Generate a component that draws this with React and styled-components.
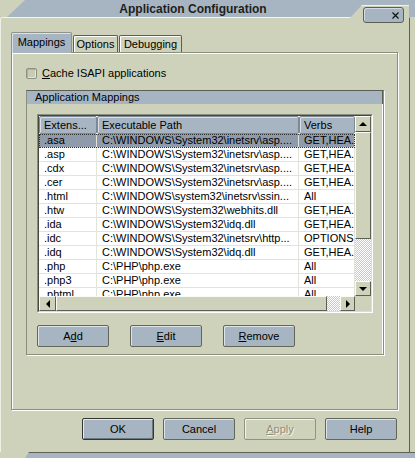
import React from 'react';
import styled, { createGlobalStyle } from 'styled-components';

// theme colours taken from the skinned dialog
const BEIGE = '#ced2bb';
const SLATE = '#a7b5c2';
const EDGE = '#8a8e7e';
const DARK = '#5c6054';
const GRID = '#e2e4dc';

const GlobalStyle = createGlobalStyle`
  html, body {
    margin: 0;
    padding: 0;
    background: ${BEIGE};
  }
  body {
    font-family: 'Liberation Sans', Arial, sans-serif;
    font-size: 11px;
    color: #000;
  }
`;

const Window = styled.div`
  position: relative;
  width: 415px;
  height: 458px;
  background: ${BEIGE};
  display: flex;
  flex-direction: column;
  overflow: hidden;
`;

const TitleBar = styled.div`
  height: 17px;
  margin-left: 7px;
  padding-right: 36px;
  background: ${SLATE};
  clip-path: polygon(18px 0, 100% 0, 100% 100%, 0 100%);
  font-size: 12px;
  font-weight: bold;
  line-height: 18px;
  text-align: center;
  color: #1d1f1c;
`;

// the beige notch that holds the close box, sits over the title bar
const CloseNotch = styled.div`
  position: absolute;
  top: 5px;
  left: 348px;
  width: 61px;
  height: 14px;
  background: ${BEIGE};
  border-top: 1px solid #f1f3ea;
  clip-path: polygon(14px 0, 100% 0, 100% 100%, 0 100%);
`;

const CloseButton = styled.div`
  position: absolute;
  top: 7px;
  left: 363px;
  width: 41px;
  height: 16px;
  box-sizing: border-box;
  background: ${SLATE};
  border: 1px solid ${DARK};
  border-radius: 3px;
  box-shadow: inset 1px 1px 0 #d3dbe2;
  display: flex;
  align-items: center;
  justify-content: flex-end;
  padding-right: 4px;
`;

const Frame = styled.div`
  flex: 1;
  width: 410px;
  box-sizing: border-box;
  border-top: 1px solid #f3f5ec;
  border-left: 1px solid #eef0e6;
  border-right: 1px solid ${DARK};
  border-top-left-radius: 3px;
  padding: 14px 11px 12px 10px;
  display: flex;
  flex-direction: column;
`;

const BottomEdge = styled.div`
  height: 6px;
  margin-left: 25px;
  box-sizing: border-box;
  background: ${SLATE};
  border-top: 1px solid #5d6354;
  clip-path: polygon(4px 0, 100% 0, 100% 100%, 0 100%);
`;

const TabStrip = styled.div`
  display: flex;
  align-items: flex-end;
  height: 21px;
  margin-bottom: -1px;
  position: relative;
  z-index: 1;
`;

const Tab = styled.div`
  width: ${(p) => p.$width}px;
  margin-left: ${(p) => p.$gap || 0}px;
  box-sizing: border-box;
  height: ${(p) => (p.$active ? 21 : 17)}px;
  margin-bottom: ${(p) => (p.$active ? 0 : 1)}px;
  background: ${(p) => (p.$active ? SLATE : BEIGE)};
  border: 1px solid ${(p) => (p.$active ? '#8e948a' : DARK)};
  border-bottom: none;
  border-radius: 2px 2px 0 0;
  box-shadow: inset 1px 1px 0 ${(p) => (p.$active ? '#dbe2e8' : '#fff')};
  text-align: center;
  line-height: ${(p) => (p.$active ? 19 : 16)}px;
`;

const Panel = styled.div`
  height: 358px;
  box-sizing: border-box;
  border: 1px solid ${EDGE};
  box-shadow: inset 1px 1px 0 #fff, 1px 1px 0 #fff;
  padding: 14px 13px 0 14px;
  display: flex;
  flex-direction: column;
`;

const CheckRow = styled.label`
  display: flex;
  align-items: center;
  gap: 5px;
  height: 12px;
  line-height: 12px;
`;

const Checkbox = styled.span`
  width: 11px;
  height: 11px;
  box-sizing: border-box;
  border: 1px solid #8d9183;
  border-radius: 2px;
  background: #c8ccb5;
  box-shadow: inset 1px 1px 0 #aeb29d, inset -1px -1px 0 #e4e6da;
`;

const Group = styled.div`
  margin-top: 11px;
  border: 1px solid ${EDGE};
  border-top-color: ${DARK};
  box-shadow: inset -1px 0 0 #fff, 1px 1px 0 #fff;
  padding-bottom: 7px;
  display: flex;
  flex-direction: column;
`;

const GroupTitle = styled.div`
  height: 13px;
  line-height: 13px;
  padding-left: 8px;
  background: ${SLATE};
  border-right: 1px solid ${DARK};
`;

const ListOuter = styled.div`
  height: 199px;
  margin: 10px 10px 0 10px;
  box-sizing: border-box;
  border: 1px solid;
  border-color: ${EDGE} #fff #fff ${EDGE};
`;

const ListInner = styled.div`
  height: 100%;
  box-sizing: border-box;
  border: 1px solid;
  border-color: #45483f #dcdfcf #dcdfcf #45483f;
  background: #fff;
  display: grid;
  grid-template-columns: 1fr 16px;
  grid-template-rows: 1fr 15px;
`;

const Table = styled.div`
  overflow: hidden;
  display: flex;
  flex-direction: column;
`;

const COLS = '58px 202px 1fr';

const HeaderRow = styled.div`
  display: grid;
  grid-template-columns: ${COLS};
  height: 18px;
  flex-shrink: 0;
`;

const HeaderCell = styled.div`
  box-sizing: border-box;
  background: ${SLATE};
  border: 1px solid #7d8894;
  border-radius: 2px;
  box-shadow: inset 1px 1px 0 #d9e0e6;
  padding-left: 4px;
  line-height: 16px;
  white-space: nowrap;
  overflow: hidden;
`;

const Row = styled.div`
  display: grid;
  grid-template-columns: ${COLS};
  height: 14px;
  flex-shrink: 0;
  box-sizing: border-box;
  border-bottom: 1px solid ${GRID};
  background: ${(p) => (p.$selected ? '#8f9bab' : '#fff')};
  outline: ${(p) => (p.$selected ? '1px dotted #333' : 'none')};
  outline-offset: -1px;
`;

const Cell = styled.div`
  padding-left: 5px;
  line-height: 13px;
  white-space: nowrap;
  overflow: hidden;
  border-right: 1px solid ${GRID};
`;

const VScroll = styled.div`
  display: flex;
  flex-direction: column;
  background: repeating-conic-gradient(#fff 0 25%, #c9cdb6 0 50%) 0 0 / 2px 2px;
`;

const HScroll = styled.div`
  display: flex;
  background: repeating-conic-gradient(#fff 0 25%, #c9cdb6 0 50%) 0 0 / 2px 2px;
`;

const ScrollPart = styled.div`
  flex: ${(p) => (p.$size ? `0 0 ${p.$size}px` : '1')};
  box-sizing: border-box;
  background: ${(p) => (p.$track ? 'transparent' : BEIGE)};
  border: ${(p) => (p.$track ? 'none' : '1px solid')};
  border-color: #fafbf5 ${DARK} ${DARK} #fafbf5;
  display: flex;
  align-items: center;
  justify-content: center;
`;

const Corner = styled.div`
  background: ${BEIGE};
`;

const arrows = {
  up: 'border-left: 4px solid transparent; border-right: 4px solid transparent; border-bottom: 4px solid #000;',
  down: 'border-left: 4px solid transparent; border-right: 4px solid transparent; border-top: 4px solid #000;',
  left: 'border-top: 4px solid transparent; border-bottom: 4px solid transparent; border-right: 4px solid #000;',
  right: 'border-top: 4px solid transparent; border-bottom: 4px solid transparent; border-left: 4px solid #000;',
};

const Arrow = styled.span`
  width: 0;
  height: 0;
  ${(p) => arrows[p.$dir]}
`;

const ButtonRow = styled.div`
  display: flex;
  gap: ${(p) => p.$gap}px;
  justify-content: ${(p) => (p.$right ? 'flex-end' : 'flex-start')};
  margin: ${(p) => p.$margin};
`;

const Button = styled.div`
  width: 72px;
  height: 22px;
  box-sizing: border-box;
  background: ${(p) => (p.$disabled ? BEIGE : SLATE)};
  border: 1px solid ${(p) => (p.$default ? '#34372f' : p.$disabled ? '#8f9384' : '#62675a')};
  border-radius: 2px;
  box-shadow: ${(p) =>
    p.$default
      ? 'inset 1px 1px 0 #e4eaef, inset -1px -1px 0 #6d7783'
      : `inset 1px 1px 0 ${p.$disabled ? '#f2f4ea' : '#dde4ea'}`};
  color: ${(p) => (p.$disabled ? '#8c907f' : '#000')};
  text-shadow: ${(p) => (p.$disabled ? '1px 1px 0 #f4f5ee' : 'none')};
  display: flex;
  align-items: center;
  justify-content: center;
`;

const PATH_ASP = 'C:\\WINDOWS\\System32\\inetsrv\\asp....';
const GET = 'GET,HEA.';

const mappings = [
  ['.asa', PATH_ASP, GET],
  ['.asp', PATH_ASP, GET],
  ['.cdx', PATH_ASP, GET],
  ['.cer', PATH_ASP, GET],
  ['.html', 'C:\\WINDOWS\\system32\\inetsrv\\ssin...', 'All'],
  ['.htw', 'C:\\WINDOWS\\System32\\webhits.dll', GET],
  ['.ida', 'C:\\WINDOWS\\System32\\idq.dll', GET],
  ['.idc', 'C:\\WINDOWS\\System32\\inetsrv\\http...', 'OPTIONS,'],
  ['.idq', 'C:\\WINDOWS\\System32\\idq.dll', GET],
  ['.php', 'C:\\PHP\\php.exe', 'All'],
  ['.php3', 'C:\\PHP\\php.exe', 'All'],
  ['.phtml', 'C:\\PHP\\php.exe', 'All'],
];

function App() {
  return (
    <Window>
      <GlobalStyle />
      <TitleBar>Application Configuration</TitleBar>
      <CloseNotch />
      <CloseButton>
        <svg width="7" height="7" viewBox="0 0 7 7">
          <path d="M0.5 0.5L6.5 6.5M6.5 0.5L0.5 6.5" stroke="#111" strokeWidth="1.2" />
        </svg>
      </CloseButton>

      <Frame>
        <TabStrip>
          <Tab $active $width={61}>Mappings</Tab>
          <Tab $width={45} $gap={1}>Options</Tab>
          <Tab $width={63} $gap={1}>Debugging</Tab>
        </TabStrip>

        <Panel>
          <CheckRow>
            <Checkbox />
            <span><u>C</u>ache ISAPI applications</span>
          </CheckRow>

          <Group>
            <GroupTitle>Application Mappings</GroupTitle>
            <ListOuter>
              <ListInner>
                <Table>
                  <HeaderRow>
                    <HeaderCell>Extens...</HeaderCell>
                    <HeaderCell>Executable Path</HeaderCell>
                    <HeaderCell>Verbs</HeaderCell>
                  </HeaderRow>
                  {mappings.map(([ext, path, verbs], i) => (
                    <Row key={ext} $selected={i === 0}>
                      <Cell>{ext}</Cell>
                      <Cell>{path}</Cell>
                      <Cell>{verbs}</Cell>
                    </Row>
                  ))}
                </Table>
                <VScroll>
                  <ScrollPart $size={16}><Arrow $dir="up" /></ScrollPart>
                  <ScrollPart $size={107} />
                  <ScrollPart $track />
                  <ScrollPart $size={15}><Arrow $dir="down" /></ScrollPart>
                </VScroll>
                <HScroll>
                  <ScrollPart $size={17}><Arrow $dir="left" /></ScrollPart>
                  <ScrollPart $size={271} />
                  <ScrollPart $track />
                  <ScrollPart $size={15}><Arrow $dir="right" /></ScrollPart>
                </HScroll>
                <Corner />
              </ListInner>
            </ListOuter>

            <ButtonRow $gap={21} $margin="12px 0 0 10px">
              <Button>A<u>d</u>d</Button>
              <Button><u>E</u>dit</Button>
              <Button><u>R</u>emove</Button>
            </ButtonRow>
          </Group>
        </Panel>

        <ButtonRow $right $gap={9} $margin="8px 1px 0 0">
          <Button $default>OK</Button>
          <Button>Cancel</Button>
          <Button $disabled><u>A</u>pply</Button>
          <Button>Help</Button>
        </ButtonRow>
      </Frame>
      <BottomEdge />
    </Window>
  );
}

export default App;
